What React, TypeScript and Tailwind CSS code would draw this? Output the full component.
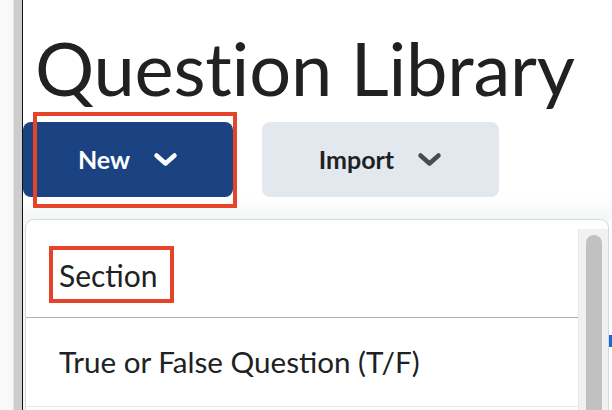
import { FC } from "react";

const Chevron: FC<{ color: string }> = ({ color }) => (
  <svg width="25" height="15" viewBox="0 0 25 15" fill="none" aria-hidden="true">
    <path
      d="M3.5 3.5L12.5 11.5L21.5 3.5"
      stroke={color}
      strokeWidth="4.5"
      strokeLinecap="round"
      strokeLinejoin="round"
    />
  </svg>
);

const App: FC = () => {
  return (
    <div
      className="flex h-[410px] w-[612px] overflow-hidden bg-white text-[#202122]"
      style={{ fontFamily: "Lato, 'Open Sans', sans-serif" }}
    >
      {/* left page gutter */}
      <div className="w-[13px] bg-[#f9f9f9]" />
      <div className="w-px bg-[#e2e2e2]" />
      <div className="w-[8px] bg-[#cdcdcd]" />
      <div className="w-px bg-[#111111]" />

      <div className="flex flex-1 flex-col">
        <h1 className="mt-[23px] pl-[12px] text-[74px] leading-[90px] font-normal tracking-[-0.2px]">
          Question Library
        </h1>

        <div className="mt-[9px] flex gap-[29px]">
          <div className="relative">
            <button className="flex h-[75px] w-[210px] items-center justify-center gap-[23px] rounded-[8px] bg-[#1b4382] text-[25px] font-bold text-white">
              New
              <Chevron color="#ffffff" />
            </button>
            <div className="pointer-events-none absolute -top-[10px] left-[10px] h-[96px] w-[204px] border-4 border-[#e5432a]" />
          </div>
          <button className="flex h-[75px] w-[237px] items-center justify-center gap-[23px] rounded-[8px] bg-[#e3e8ef] text-[25px] font-bold text-[#202122]">
            Import
            <Chevron color="#494c4e" />
          </button>
        </div>

        <div className="h-[22px] bg-gradient-to-b from-white to-[#f5f6f7]" />

        <div className="flex flex-1 bg-[#f5f6f7]">
          <div className="ml-[2px] flex flex-1 rounded-t-[9px] border border-b-0 border-[#d3d9e1] bg-white pt-[9px]">
            <div className="flex flex-1 flex-col">
              <div className="flex h-[89px] items-center border-b border-[#a9b0b8] pt-[4px] pl-[33px] text-[30px]">
                <span className="relative leading-[36px]">
                  Section
                  <span className="pointer-events-none absolute -top-[11px] -left-[10px] h-[57px] w-[125px] border-4 border-[#e5432a]" />
                </span>
              </div>
              <div className="flex h-[89px] items-center border-b border-[#e3e7ec] pl-[33px] text-[29.6px]">
                True or False Question (T/F)
              </div>
            </div>
            <div className="w-[30px] border-l border-[#e8e8e8] bg-[#f1f1f1] pt-[6px] pl-[7px] pr-[6px]">
              <div className="h-full w-[16px] rounded-t-[8px] bg-[#c1c1c1]" />
            </div>
          </div>
          <div className="flex w-[3px] flex-col bg-white">
            <div className="mt-[116px] h-[12px] w-[3px] bg-[#1d6ad0]" />
          </div>
        </div>
      </div>
    </div>
  );
};

export default App;
